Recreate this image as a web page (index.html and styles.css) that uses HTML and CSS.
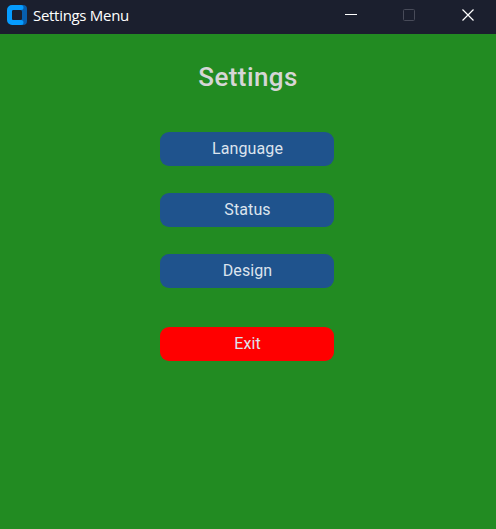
FILE: index.html
```html
<!DOCTYPE html>
<html lang="en">
<head>
<meta charset="utf-8">
<title>Settings Menu</title>
<link rel="stylesheet" href="styles.css">
</head>
<body>
<header class="titlebar">
  <svg class="logo" width="20" height="20" viewBox="0 0 20 20"><path d="M13 0h3a4 4 0 0 1 4 4v12a4 4 0 0 1-4 4h-3z" fill="#075faf"/><path d="M5 0h9a2.500 2.500 0 0 1 0 5H7a2 2 0 0 0-2 2v6a2 2 0 0 0 2 2h7a2.500 2.500 0 0 1 0 5H5a5 5 0 0 1-5-5V5a5 5 0 0 1 5-5z" fill="#069cff"/><rect x="5" y="5" width="10" height="10" rx="1.5" fill="#1b1f2e"/></svg>
  <span class="caption">Settings Menu</span>
  <div class="controls">
    <svg width="58" height="30"><path d="M23 14.5h12" stroke="#fff"/></svg>
    <svg width="58" height="30"><rect x="23.5" y="9.5" width="11" height="11" rx="1" fill="none" stroke="#484b59"/></svg>
    <svg width="58" height="30"><path d="M24.5 9.500l11 11M35.500 9.500l-11 11" stroke="#fff" stroke-width="1.2"/></svg>
  </div>
</header>
<main class="content">
  <h1>Settings</h1>
  <button>Language</button>
  <button>Status</button>
  <button>Design</button>
  <button class="exit">Exit</button>
</main>
</body>
</html>
```
FILE: styles.css
```css
body { margin: 0; height: 529px; display: flex; flex-direction: column; background: #228b22; overflow: hidden; }
.titlebar { height: 34px; display: flex; background: #1b1f2e; color: #fff; }
.logo { margin: 5px 6px 0 7px; }
.caption { font: 15px/30px "Open Sans", sans-serif; letter-spacing: -0.3px; }
.controls { margin-left: auto; display: flex; }
.content { flex: 1; display: flex; flex-direction: column; align-items: center; padding-right: 2px; }
h1 { margin: 27px 0 39px; padding-left: 2px; font: 500 26px/32px Roboto, sans-serif; letter-spacing: 0.4px; color: #d6d6d6; }
button { width: 174px; height: 34px; margin: 0 0 27px; padding: 0 0 0 1px; border: 0; border-radius: 9px; background: #1f538d; color: #dce4ee; font: 16px/34px Roboto, sans-serif; letter-spacing: 0.1px; }
.exit { margin-top: 12px; background: #f00; }
```
